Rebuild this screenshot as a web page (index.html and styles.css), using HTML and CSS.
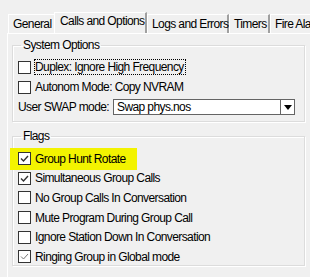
FILE: index.html
```html
<!DOCTYPE html>
<html lang="en">
<head>
  <meta charset="UTF-8" />
  <title>Calls and Options</title>
  <link rel="stylesheet" href="styles.css">
</head>
<body>
  <div class="tabs">
    <div class="tab general">General</div>
    <div class="tab active">Calls and Options</div>
    <div class="tab logs">Logs and Errors</div>
    <div class="tab timers">Timers</div>
    <div class="tab">Fire Alarm</div>
  </div>

  <div class="panel">
    <fieldset class="group sys">
      <legend>System Options</legend>
      <div class="row">
        <span class="box"></span>
        <span class="focus">Duplex: Ignore High Frequency</span>
      </div>
      <div class="row">
        <span class="box"></span>
        <span>Autonom Mode: Copy NVRAM</span>
      </div>
      <div class="row swap">
        <span class="lbl">User SWAP mode:</span>
        <div class="select">
          <span class="val">Swap phys.nos</span>
          <span class="arrow"></span>
        </div>
      </div>
    </fieldset>

    <fieldset class="group flags">
      <legend>Flags</legend>
      <div class="row hl">
        <span class="box"><svg viewBox="0 0 11 11"><polyline points="2,5.5 4.5,8 9,3" /></svg></span>
        <span>Group Hunt Rotate</span>
      </div>
      <div class="row">
        <span class="box"><svg viewBox="0 0 11 11"><polyline points="2,5.5 4.5,8 9,3" /></svg></span>
        <span>Simultaneous Group Calls</span>
      </div>
      <div class="row">
        <span class="box"></span>
        <span>No Group Calls In Conversation</span>
      </div>
      <div class="row">
        <span class="box"></span>
        <span>Mute Program During Group Call</span>
      </div>
      <div class="row">
        <span class="box"></span>
        <span>Ignore Station Down In Conversation</span>
      </div>
      <div class="row">
        <span class="box light"><svg viewBox="0 0 11 11"><polyline points="2,5.5 4.5,8 9,3" /></svg></span>
        <span>Ringing Group in Global mode</span>
      </div>
    </fieldset>

    <div class="more">Hold Up Calls</div>
  </div>
</body>
</html>
```

FILE: styles.css
```css
body {
  margin: 0;
  background: #f0f0f0;
  font-family: 'Liberation Sans', Arial, sans-serif;
  font-size: 12px;
  letter-spacing: -0.6px;
  color: #000;
  width: 310px;
  height: 277px;
  overflow: hidden;
}
.tabs {
  display: flex;
  align-items: flex-end;
  height: 33px;
  padding-left: 8px;
  white-space: nowrap;
  overflow: hidden;
}
.tab {
  height: 18px;
  line-height: 19px;
  padding: 0 4px;
  background: #f0f0f0;
  border-top: 1px solid #fff;
  border-left: 1px solid #fff;
  border-right: 2px solid #a0a0a0;
  flex-shrink: 0;
}
.tab.general {
  width: 37px;
  border-right: none;
}
.tab.active {
  width: 80px;
  height: 21px;
  line-height: 17px;
  padding: 0 5px;
  position: relative;
  z-index: 1;
  margin-bottom: -1px;
}
.tab.logs {
  width: 71px;
}
.tab.timers {
  width: 30px;
}
.panel {
  margin-left: 7px;
  border-top: 1px solid #fff;
  border-left: 1px solid #fff;
  padding: 0 4px;
}
.group {
  margin: 0;
  padding: 0 0 0 5px;
  border: 1px solid #dcdcdc;
  box-shadow: 1px 1px 0 #fff, inset 1px 1px 0 #fff;
  width: 286px;
}
.group legend {
  padding: 0 2px;
  margin-left: 3px;
  line-height: 13px;
}
.sys {
  margin-top: 5px;
  height: 76px;
  padding-top: 5px;
}
.flags {
  margin-top: 8px;
  height: 128px;
  padding-top: 6px;
}
.row {
  display: flex;
  align-items: center;
  height: 20px;
  white-space: nowrap;
  position: relative;
}
.flags .row {
  height: 19.6px;
}
.box {
  width: 11px;
  height: 11px;
  border: 1px solid #333;
  background: #fff;
  margin-right: 4px;
  flex-shrink: 0;
  display: flex;
}
.box svg {
  width: 11px;
  height: 11px;
}
.box polyline {
  fill: none;
  stroke: #333;
  stroke-width: 1.4;
}
.box.light polyline {
  stroke: #777;
  stroke-width: 1;
}
.focus {
  outline: 1px dotted #000;
  outline-offset: 0;
  padding: 0 1px 0 0;
}
.swap .lbl {
  width: 95px;
}
.select {
  display: flex;
  width: 180px;
  height: 14px;
  border: 1px solid #646464;
  background: #fff;
  align-items: center;
}
.select .val {
  flex: 1;
  padding-left: 3px;
}
.select .arrow {
  width: 13px;
  height: 14px;
  border-left: 1px solid #646464;
  position: relative;
}
.select .arrow::after {
  content: "";
  position: absolute;
  left: 3px;
  top: 5px;
  border-left: 4px solid transparent;
  border-right: 4px solid transparent;
  border-top: 5px solid #000;
}
.hl::before {
  content: "";
  position: absolute;
  left: -8px;
  top: -1px;
  width: 127px;
  height: 22px;
  background: #f3f300;
  z-index: -1;
}
.hl {
  z-index: 0;
}
.more {
  margin-top: 9px;
  padding-left: 6px;
}
```
